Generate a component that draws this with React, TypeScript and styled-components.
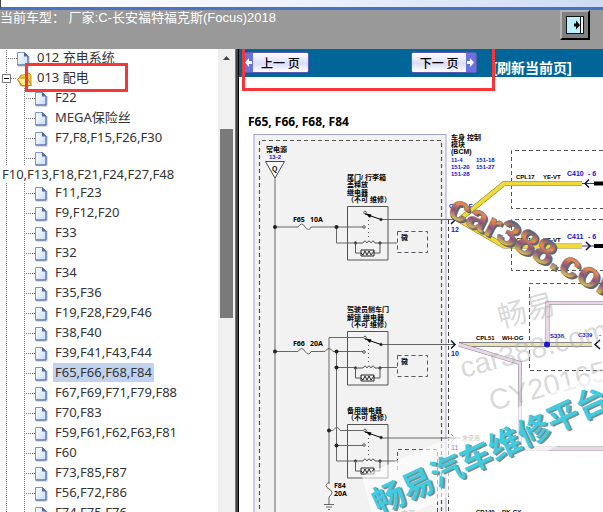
import React from 'react';
import styled, { createGlobalStyle } from 'styled-components';

const GlobalStyle = createGlobalStyle`
  *, *::before, *::after { box-sizing: border-box; }
  html, body, #root { height: 100%; margin: 0; }
  body {
    overflow: hidden;
    background: #fff;
    font-family: "Noto Sans", "Noto Sans CJK SC", sans-serif;
  }
`;

const Page = styled.div`
  display: flex;
  flex-direction: column;
  height: 100vh;
  overflow: hidden;
`;

const WindowStrip = styled.div`
  flex: none;
  height: 10px;
  border-left: 1px solid #444;
  border-bottom: 3px solid #4a72c4;
  background: linear-gradient(90deg, #fff, #eef2fc 50%, #cfdaf3);
`;

const Header = styled.header`
  flex: none;
  display: flex;
  justify-content: space-between;
  align-items: flex-start;
  height: 39px;
  padding-right: 13px;
  background: #999;
`;

const VehicleTitle = styled.h1`
  margin: 0;
  color: #fff;
  font: 400 13px/16px "Liberation Sans", "Noto Sans CJK SC", sans-serif;
  white-space: pre;
`;

const ToggleButton = styled.button`
  display: grid;
  place-items: center;
  width: 30px;
  height: 30px;
  padding: 0;
  border: 2px solid;
  border-color: #b4b4b4 #000 #000 #b4b4b4;
  background: #808080;
`;

const Body = styled.div`
  flex: 1;
  min-height: 0;
  display: flex;
`;

const Sidebar = styled.nav`
  flex: none;
  width: 239px;
  display: flex;
  border-right: 1px solid #000;
  overflow: hidden;
`;

const Divider = styled.div`
  flex: none;
  width: 3px;
  background: linear-gradient(90deg, #777 33%, #444 33%);
`;

const TreeList = styled.ul`
  flex: 1;
  min-width: 0;
  margin: -1px 0 0;
  padding: 0;
  list-style: none;
  color: #333;
  font-size: 13px;
`;

const TreeItem = styled.li<{ $wrapped?: boolean }>`
  position: relative;
  display: flex;
  flex-direction: ${(p) => (p.$wrapped ? 'column' : 'row')};
  height: ${(p) => (p.$wrapped ? 35 : 20)}px;
  white-space: nowrap;
`;

const Guides = styled.svg<{ $wide?: boolean; $short?: boolean }>`
  flex: none;
  width: ${(p) => (p.$wide ? 53 : 35)}px;
  height: ${(p) => (p.$short ? 18 : 20)}px;
`;

const TreeLink = styled.a<{ $selected?: boolean; $short?: boolean }>`
  height: ${(p) => (p.$short ? 16 : 19)}px;
  padding: 0 2px;
  line-height: ${(p) => (p.$short ? 16 : 19)}px;
  color: inherit;
  text-decoration: none;
  background: ${(p) => (p.$selected ? '#c1d2ee' : 'transparent')};
`;

const ScrollTrack = styled.div`
  flex: none;
  display: flex;
  flex-direction: column;
  align-items: center;
  width: 17px;
  padding-top: 6px;
  background: #f0f0f0;
`;

const ScrollArrow = styled.svg`
  flex: none;
  width: 9px;
  height: 5px;
`;

const ScrollThumb = styled.div`
  width: 13px;
  height: 189px;
  margin-top: 69px;
  background: #7a7a7a;
`;

const Main = styled.main`
  flex: 1;
  min-width: 0;
  display: flex;
  flex-direction: column;
  overflow: hidden;
`;

const Toolbar = styled.div`
  position: relative;
  flex: none;
  display: flex;
  align-items: flex-start;
  height: 28px;
  padding: 3px 0 0 3px;
  background: #006699;
`;

const PageButton = styled.button`
  display: flex;
  align-items: stretch;
  height: 21px;
  padding: 0;
  border: 1px solid #5a5ab4;
  border-radius: 2px;
  background: linear-gradient(#fff, #dcdcfa 55%, #fff);
  color: #000;
  font: 500 12px/19px "Noto Sans CJK SC", sans-serif;
  white-space: pre;
`;

const PageButtonLabel = styled.span`
  padding: 0 8px;
`;

const ButtonArrow = styled.svg`
  width: 10px;
  height: 19px;
`;

const NextGroup = styled.div`
  display: flex;
  align-items: flex-start;
  margin-left: 102px;
`;

const RefreshLink = styled.a`
  margin: 6px 0 0 15px;
  color: #fff;
  font: 700 14px/20px "Liberation Sans", "Noto Sans CJK SC", sans-serif;
  text-decoration: none;
  white-space: nowrap;
`;

const RowMark = styled.span`
  position: absolute;
  z-index: 1;
  left: 25px;
  top: -5px;
  width: 103px;
  height: 29px;
  border: 3px solid #fb3535;
  pointer-events: none;
`;

const ToolbarMark = styled.span`
  position: absolute;
  z-index: 1;
  left: 3px;
  top: -5px;
  width: 253px;
  height: 47px;
  border: 3px solid #fb3535;
  pointer-events: none;
`;

const DiagramArea = styled.section`
  flex: 1;
  min-height: 0;
  overflow: hidden;
  background: #fff;
`;

const Drawing = styled.svg`
  display: block;
  width: 364px;
  height: 435px;
  font-family: "Liberation Sans", "Noto Sans CJK SC", sans-serif;
  font-weight: 700;
  font-size: 8px;
`;

interface Entry {
  label: string;
  wrapped?: boolean;
  selected?: boolean;
}

const circuits: Entry[] = [
  { label: 'F22' },
  { label: 'MEGA保险丝' },
  { label: 'F7,F8,F15,F26,F30' },
  { label: 'F10,F13,F18,F21,F24,F27,F48', wrapped: true },
  { label: 'F11,F23' },
  { label: 'F9,F12,F20' },
  { label: 'F33' },
  { label: 'F32' },
  { label: 'F34' },
  { label: 'F35,F36' },
  { label: 'F19,F28,F29,F46' },
  { label: 'F38,F40' },
  { label: 'F39,F41,F43,F44' },
  { label: 'F65,F66,F68,F84', selected: true },
  { label: 'F67,F69,F71,F79,F88' },
  { label: 'F70,F83' },
  { label: 'F59,F61,F62,F63,F81' },
  { label: 'F60' },
  { label: 'F73,F85,F87' },
  { label: 'F56,F72,F86' },
  { label: 'F74,F75,F76' },
];

const dots = { stroke: '#777', strokeWidth: 1, strokeDasharray: '1 1', fill: 'none' };

function PageIcon({ x }: { x: number }) {
  return (
    <g transform={`translate(${x} 4)`}>
      <path d="M1 14H12V4" stroke="#bbb" fill="none" />
      <path d="M.5 .5H7.5L11 4V13H.5Z" fill="url(#sheet)" stroke="#7898ce" />
      <path d="M.5 13H11V4" fill="none" stroke="#5a6ca6" />
      <path d="M7 0L11.5 4.5H7Z" fill="#4f68aa" />
    </g>
  );
}

function FolderIcon() {
  return (
    <g transform="translate(17 4)">
      <path d="M1 8L4 3H7L9 1H12L14 3V12L12 14H4Z" fill="#f3cf45" stroke="#c09722" />
      <path d="M.5 7.5L2 6H10L11 7.5L14.5 13.500H5Z" fill="#ffe67c" stroke="#b58a18" />
      <path d="M3 8H10" stroke="#fffbd0" />
    </g>
  );
}

function ChildGuides({ short }: { short?: boolean }) {
  const h = short ? 18 : 20;
  return (
    <Guides $wide $short={short} viewBox={`0 0 53 ${h}`} aria-hidden="true">
      <path d={`M6.5 0V${h}M24.5 0V${h}M26 10.5H35`} {...dots} />
      <PageIcon x={35} />
    </Guides>
  );
}

function Tree() {
  return (
    <TreeList>
      <TreeItem>
        <Guides viewBox="0 0 35 20" aria-hidden="true">
          <defs>
            <linearGradient id="sheet" x1="0" y1="0" x2="1" y2="1">
              <stop offset="0" stopColor="#fff" />
              <stop offset="1" stopColor="#c5def8" />
            </linearGradient>
          </defs>
          <path d="M6.5 0V20M8 10.5H17" {...dots} />
          <PageIcon x={17} />
        </Guides>
        <TreeLink href="#012">012 充电系统</TreeLink>
      </TreeItem>
      <TreeItem>
        <Guides viewBox="0 0 35 20" aria-hidden="true">
          <path d="M6.5 0V20M11 10.5H17" {...dots} />
          <path d="M2.5 6.5H10.5V14.5H2.5Z" fill="#fff" stroke="#777" />
          <path d="M4 10.5H9" stroke="#000" />
          <FolderIcon />
        </Guides>
        <TreeLink href="#013">013 配电</TreeLink>
        <RowMark />
      </TreeItem>
      {circuits.map((c) => (
        <TreeItem key={c.label} $wrapped={c.wrapped}>
          <ChildGuides short={c.wrapped} />
          <TreeLink href={`#${c.label}`} $selected={c.selected} $short={c.wrapped}>
            {c.label}
          </TreeLink>
        </TreeItem>
      ))}
    </TreeList>
  );
}

function Relay({ y }: { y: number }) {
  return (
    <g transform={`translate(347 ${y})`} stroke="#555" fill="none" strokeWidth="1">
      <path d="M.5 .5H41V54H.5Z" />
      <circle cx="18" cy="6.500" r="1.300" />
      <path d="M18 8L34 13.500" stroke="#000" />
      <path d="M19 7.500L24.500 8.500L23 12Z" fill="#000" stroke="none" />
      <circle cx="34" cy="13.500" r="1.300" fill="#000" />
      <circle cx="17" cy="21" r="1.300" />
      <path d="M21.500 10V34" strokeDasharray="1 3" />
      <circle cx="8.500" cy="37" r="1.200" fill="#000" />
      <circle cx="33" cy="37" r="1.200" fill="#000" />
      <path d="M8 37H16q2-4 4 0q2-4 4 0q2-4 4 0H33M8.500 37V47H14M33 37V47H27" />
      <path d="M14 44H27V50H14ZM14 47L16 49L18 45L20 49L22 45L24 49L27 45" stroke="#222" />
    </g>
  );
}

function ControlBox({ y }: { y: number }) {
  return (
    <g>
      <path d={`M397.500 ${y}.5H427.500V${y + 21}.5H397.500Z`} fill="none" stroke="#555" strokeDasharray="4 3" />
      <text x="401" y={y + 9} fontSize="7">微</text>
    </g>
  );
}

function Wiring() {
  return (
    <g>
      <text x="248" y="126" fontFamily="Noto Sans" fontSize="12">F65, F66, F68, F84</text>
      <rect x="254" y="134.500" width="192" height="400" fill="#f2f2f2" stroke="#a3a3cf" />
      <path d="M259.500 530V140.500H441.500V530" fill="none" stroke="#555" strokeDasharray="4 3" strokeWidth="1.200" />
      <path d="M448.500 220V520" stroke="#444" strokeDasharray="4 3" />
      <text x="266" y="152" fontSize="7">常电源</text>
      <text x="269" y="159" fontSize="6" fill="#1212d8">13-2</text>
      <path d="M265.500 161.500H284.500L275 178Z" fill="#fff" stroke="#444" />
      <text x="272" y="171" fontSize="7">Q</text>

      <g stroke="#666" fill="none">
        <path d="M275 178V520M275 227H298q4-6 7 0q4 5 6 0H363M336.500 227V243H356" />
        <path d="M381 219.500H456M380 243H397" />
        <path d="M275 351.500H298q4-6 7 0q4 5 6 0H325q4-6 8 0H363M329 484V337.500H363M336.500 351.500V461H356M336.500 367.500H356" />
        <path d="M381 344.500H456M380 367.500H397" />
        <path d="M329 430.500H333q4-6 7 0H363M336.500 445.500H363M381 438H456M380 461H397" />
        <path d="M329 482q-6 4 0 7t0 8V504M324 504.500H334M326 507H332M328 509.500H330" />
      </g>
      <g fill="#222">
        <circle cx="275" cy="227" r="2" />
        <circle cx="275" cy="351.500" r="2" />
        <circle cx="336.500" cy="227" r="2" />
        <circle cx="336.500" cy="351.500" r="2" />
        <circle cx="336.500" cy="367.500" r="2" />
        <circle cx="329" cy="430.500" r="2" />
        <circle cx="336.500" cy="445.500" r="2" />
      </g>
      <g fontFamily="Noto Sans" fontSize="7">
        <text x="293" y="222">F65</text>
        <text x="310" y="222">10A</text>
        <text x="293" y="346">F66</text>
        <text x="310" y="346">20A</text>
        <text x="334" y="488">F84</text>
        <text x="334" y="496">20A</text>
      </g>

      <g fontSize="7">
        <text x="347" y="180">尾门/ 行李箱</text>
        <text x="347" y="187">盖释放</text>
        <text x="347" y="195">继电器</text>
        <text x="347" y="202">（不可 维修）</text>
        <text x="347" y="312">驾驶员侧车门</text>
        <text x="347" y="320">解锁 继电器</text>
        <text x="347" y="327">（不可 维修）</text>
        <text x="347" y="413">备用继电器</text>
        <text x="347" y="420">（不可 维修）</text>
      </g>
      <Relay y={206} />
      <Relay y={331} />
      <Relay y={424} />
      <ControlBox y={231} />
      <ControlBox y={355} />
      <path d="M397.500 470V449.500H437.500V530" fill="none" stroke="#555" strokeDasharray="4 3" />
      <text x="401" y="516" fontSize="7" fill="#777">电源</text>

      <g fontSize="7">
        <text x="451" y="140">车身 控制</text>
        <text x="451" y="147">模块</text>
        <text x="451" y="154">(BCM)</text>
        <g fill="#1212d8">
          <text x="451" y="162" fontSize="6">11-4</text>
          <text x="476" y="162" fontSize="6">151-18</text>
          <text x="451" y="169" fontSize="6">151-20</text>
          <text x="476" y="169" fontSize="6">151-27</text>
          <text x="451" y="176" fontSize="6">151-28</text>
          <text x="449" y="208" fontSize="6">C7280-E</text>
          <text x="451" y="232">12</text>
          <text x="451" y="356">10</text>
          <text x="451" y="450">11</text>
        </g>
      </g>

      <g fill="none" stroke="#555" strokeDasharray="4 3">
        <path d="M603 150.500H511.500V208.500H603" />
        <path d="M603 219.500H511.500V270.500H603" />
        <path d="M603 283.500H529.500V370.500H603" />
      </g>
      <g fill="none">
        <path d="M459 220L504 183.500H582M459 220L504 246H582" stroke="#8a8220" strokeWidth="5" />
        <path d="M459 220L504 183.500H582M459 220L504 246H582" stroke="#eedb3b" strokeWidth="4" />
        <path d="M459 344.500H592" stroke="#888" strokeWidth="5" />
        <path d="M459 344.500H592" stroke="#ece3b4" strokeWidth="3" />
        <path d="M459 344.500L520 363V448.500H603M547.500 344V303H603" stroke="#888" strokeWidth="4" />
        <path d="M459 344.500L520 363V448.500H603M547.500 344V303H603" stroke="#ead6e8" strokeWidth="3" />
        <path d="M594 183.500H603M594 246H603" stroke="#000" strokeWidth="4" />
        <path d="M582 183.500H594M582 246H594" stroke="#3333aa" />
        <path d="M589 179.500L585 183.500L589 187.500M586 242L590 246L586 250M451 216L455 220L451 224M451 340.500L455 344.500L451 348.500M600 340L595 344.500L600 349" stroke="#111144" strokeWidth="1.500" />
        <path d="M451 434L455 438L451 442M448 438H461" stroke="#999" />
      </g>
      <circle cx="547" cy="344.500" r="3" fill="#1717e8" />
      <g>
        <g fontSize="6">
          <text x="516" y="179">CPL17</text>
          <text x="543" y="179">YE-VT</text>
          <text x="516" y="242">CPL17</text>
          <text x="543" y="242">YE-VT</text>
          <text x="476" y="340">CPL51</text>
          <text x="502" y="340">WH-OG</text>
          <text x="476" y="514">CD140</text>
          <text x="502" y="514">BK-GY</text>
          <text x="462" y="440" fill="#999">未使用</text>
        </g>
        <g fill="#1212d8" fontSize="7">
          <text x="567" y="176">C410</text>
          <text x="588" y="176">- 6</text>
          <text x="567" y="239">C411</text>
          <text x="588" y="239">- 6</text>
          <text x="550" y="338" fontSize="6">S336</text>
          <text x="578" y="337" fontSize="6">C339</text>
          <text x="599" y="337" fontSize="6">-</text>
        </g>
      </g>
    </g>
  );
}

function Watermarks() {
  return (
    <g>
      <g fill="#aaa" fillOpacity="0.45" fontWeight="400" fontSize="29">
        <text transform="translate(501 328) rotate(-15)">畅易</text>
        <text transform="translate(463 378) rotate(-15)">car388.com</text>
        <text transform="translate(492 411) rotate(-15)">CY20165</text>
      </g>
      <path d="M362 476L603 370V425L376 530Z" fill="#fff" fillOpacity="0.6" />
      <g fontSize="32" fontWeight="700">
        <text transform="translate(381 516) rotate(-25)" fill="#888">畅易汽车维修平台</text>
        <text transform="translate(379 515) rotate(-25)" fill="#3fcbe0">畅易汽车维修平台</text>
      </g>
      <g fontSize="36" fontWeight="700">
        <text transform="translate(448 217) rotate(27)" fill="#666">car388.com</text>
        <text transform="translate(446 215) rotate(27)" fill="url(#chrome)" stroke="#777" strokeWidth="0.500">car388.com</text>
      </g>
    </g>
  );
}

export default function App() {
  return (
    <Page>
      <GlobalStyle />
      <WindowStrip />
      <Header>
        <VehicleTitle>当前车型： 厂家:C-长安福特福克斯(Focus)2018</VehicleTitle>
        <ToggleButton aria-label="展开">
          <svg width="20" height="20" viewBox="0 0 20 20">
            <path d="M1 1H19V19H1Z" fill="#111" />
            <path d="M2 2H15V18H2Z" fill="#bdf0ff" />
            <path d="M16 2H18V18H16Z" fill="#fff" />
            <path d="M9 8.500H11V5.500L15 10L11 14.500V11.500H9Z" fill="#000" />
          </svg>
        </ToggleButton>
      </Header>
      <Body>
        <Sidebar aria-label="目录">
          <Tree />
          <ScrollTrack>
            <ScrollArrow viewBox="0 0 9 5"><path d="M1 5L4.500 1L8 5Z" fill="#444" /></ScrollArrow>
            <ScrollThumb />
          </ScrollTrack>
          <Divider />
        </Sidebar>
        <Main>
          <Toolbar>
            <ToolbarMark />
            <PageButton>
              <ButtonArrow viewBox="0 0 10 19"><path d="M0 0H10V19H0Z" fill="#6a72dc" /><path d="M9 8H6V5L2 9.500L6 14V11H9Z" fill="#fff" /></ButtonArrow>
              <PageButtonLabel>上一 页</PageButtonLabel>
            </PageButton>
            <NextGroup>
              <PageButton>
                <PageButtonLabel>下一 页</PageButtonLabel>
                <ButtonArrow viewBox="0 0 10 19"><path d="M0 0H10V19H0Z" fill="#6a72dc" /><path d="M1 8H4V5L8 9.500L4 14V11H1Z" fill="#fff" /></ButtonArrow>
              </PageButton>
              <RefreshLink href="#refresh">[刷新当前页]</RefreshLink>
            </NextGroup>
          </Toolbar>
          <DiagramArea>
            <Drawing viewBox="239 77 364 435" role="img" aria-label="F65, F66, F68, F84">
              <defs>
                <linearGradient id="chrome" x1="0" y1="0" x2="0" y2="1">
                  <stop offset="0.200" stopColor="#555a80" />
                  <stop offset="0.400" stopColor="#f08a48" />
                  <stop offset="0.600" stopColor="#8a4d88" />
                  <stop offset="0.850" stopColor="#f2dc40" />
                </linearGradient>
              </defs>
              <Wiring />
              <Watermarks />
            </Drawing>
          </DiagramArea>
        </Main>
      </Body>
    </Page>
  );
}
